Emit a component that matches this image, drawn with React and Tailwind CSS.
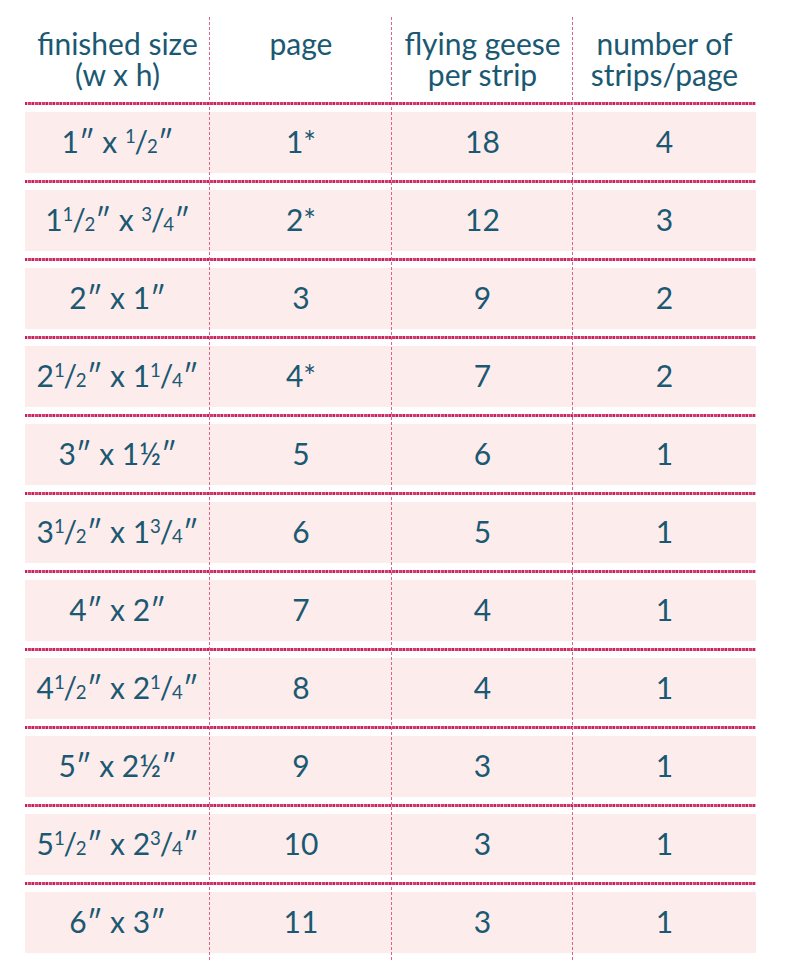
import React from 'react';

const Frac = ({ n, d }) => (
  <span className="inline-flex items-baseline">
    <span className="text-[0.62em] relative -top-[0.55em]">{n}</span>
    <span className="-mx-[0.04em]">/</span>
    <span className="text-[0.62em]">{d}</span>
  </span>
);

const rows = [
  [<>1″ x <Frac n="1" d="2" />″</>, '1*', '18', '4'],
  [<>1<Frac n="1" d="2" />″ x <Frac n="3" d="4" />″</>, '2*', '12', '3'],
  [<>2″ x 1″</>, '3', '9', '2'],
  [<>2<Frac n="1" d="2" />″ x 1<Frac n="1" d="4" />″</>, '4*', '7', '2'],
  [<>3″ x 1½″</>, '5', '6', '1'],
  [<>3<Frac n="1" d="2" />″ x 1<Frac n="3" d="4" />″</>, '6', '5', '1'],
  [<>4″ x 2″</>, '7', '4', '1'],
  [<>4<Frac n="1" d="2" />″ x 2<Frac n="1" d="4" />″</>, '8', '4', '1'],
  [<>5″ x 2½″</>, '9', '3', '1'],
  [<>5<Frac n="1" d="2" />″ x 2<Frac n="3" d="4" />″</>, '10', '3', '1'],
  [<>6″ x 3″</>, '11', '3', '1'],
];

const headers = [
  ['finished size', '(w x h)'],
  ['page'],
  ['flying geese', 'per strip'],
  ['number of', 'strips/page'],
];

const cols = 'grid grid-cols-[185px_182px_181px_183px]';

export default function App() {
  return (
    <div className="relative w-[794px] h-[975px] bg-white font-['Lato','Liberation_Sans',sans-serif] text-[30px] text-[#1b5872]">
      <div className="ml-[25px] w-[731px]">
        {/* Header */}
        <div className={`${cols} pt-[28px] h-[102px] text-center`}>
          {headers.map((h, i) => (
            <div key={i} className="flex flex-col gap-px">
              {h.map((line) => (
                <div key={line} className="leading-[30px] whitespace-nowrap">{line}</div>
              ))}
            </div>
          ))}
        </div>

        {/* Rows */}
        {rows.map((r, i) => (
          <div key={i} className="h-[78px]">
            <div className="h-[3px] bg-[repeating-linear-gradient(90deg,#c6215a_0px,#c6215a_2px,#f0b3c6_2px,#f0b3c6_3px,#d23a6b_3px,#d23a6b_6px,#e77a9c_6px,#e77a9c_7px)]" />
            <div className={`${cols} mt-[7px] h-[61px] pb-[3px] bg-[#fdecec] items-center text-center leading-none`}>
              {r.map((c, j) => (
                <div key={j} className="whitespace-nowrap">{c}</div>
              ))}
            </div>
          </div>
        ))}
      </div>

      {/* Vertical dashed column lines */}
      <div className="absolute left-[209px] top-[17px] bottom-[15px] border-l border-dashed border-[#e0628b]" />
      <div className="absolute left-[391px] top-[17px] bottom-[15px] border-l border-dashed border-[#e0628b]" />
      <div className="absolute left-[572px] top-[17px] bottom-[15px] border-l border-dashed border-[#e0628b]" />
    </div>
  );
}
